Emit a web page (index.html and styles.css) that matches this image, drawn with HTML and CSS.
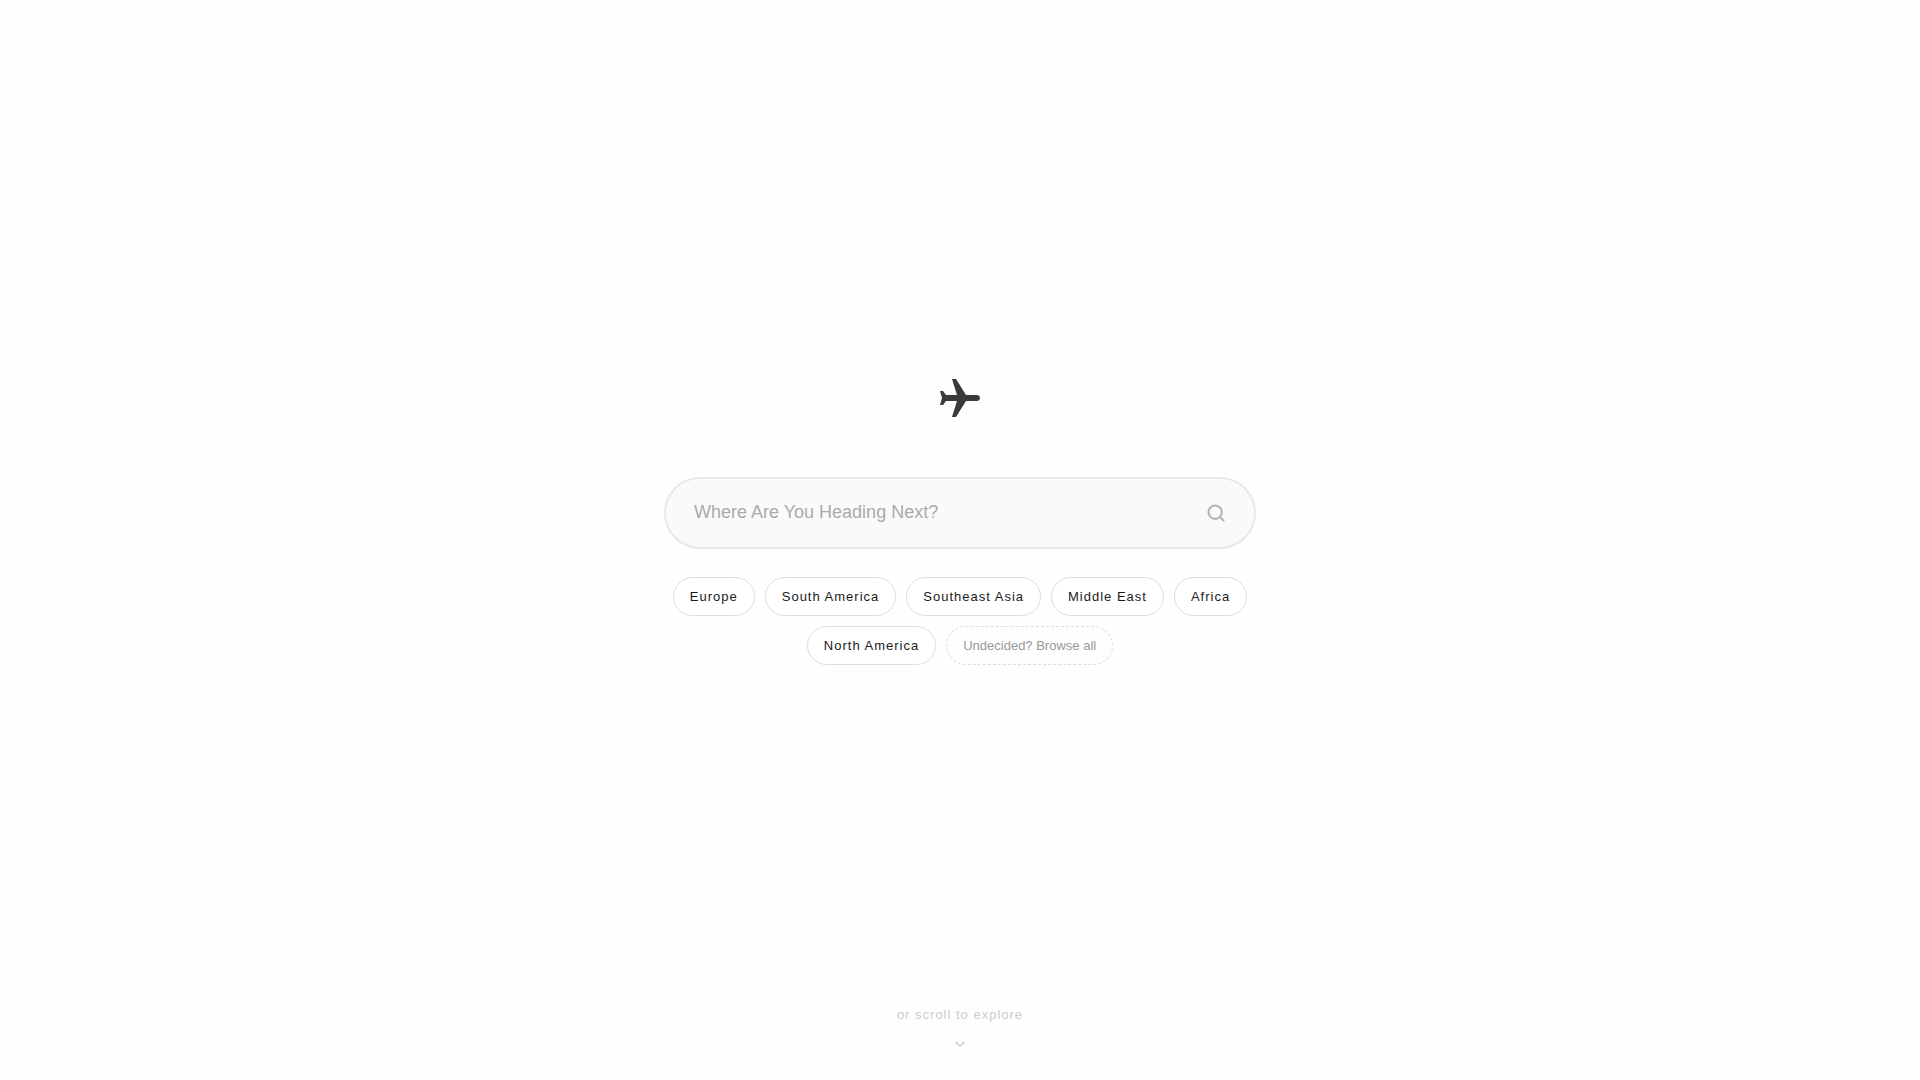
FILE: index.html
```html
<!DOCTYPE html>
<html lang="en">
<head>
    <meta charset="UTF-8">
    <meta name="viewport" content="width=device-width, initial-scale=1.0">
    <title>Where Are You Heading Next?</title>
    <link rel="stylesheet" href="styles.css">
</head>
<body>
    <main class="hero">
        <svg class="plane" viewBox="0 0 24 24" aria-hidden="true">
            <path transform="rotate(90 12 12)" d="M21 16v-2l-8-5V3.5c0-.83-.67-1.5-1.5-1.5S10 2.67 10 3.5V9l-8 5v2l8-2.5V19l-2 1.5V22l3.5-1 3.5 1v-1.5L13 19v-5.5l8 2.5z"/>
        </svg>

        <form class="search" role="search">
            <input type="text" class="search-input" id="destination" aria-label="Destination" placeholder="Where Are You Heading Next?">
            <button type="submit" class="search-button" aria-label="Search">
                <svg viewBox="0 0 24 24">
                    <circle cx="11" cy="11" r="8"/>
                    <path d="M21 21l-4.35-4.35"/>
                </svg>
            </button>
        </form>

        <div class="regions">
            <button type="button" class="pill">Europe</button>
            <button type="button" class="pill">South America</button>
            <button type="button" class="pill">Southeast Asia</button>
            <button type="button" class="pill">Middle East</button>
            <button type="button" class="pill">Africa</button>
            <button type="button" class="pill">North America</button>
            <button type="button" class="pill pill-all">Undecided? Browse all</button>
        </div>
    </main>

    <footer class="scroll-hint">
        <span>or scroll to explore</span>
        <svg viewBox="0 0 24 24" aria-hidden="true">
            <path d="M6 9l6 6 6-6"/>
        </svg>
    </footer>
</body>
</html>
```
FILE: styles.css
```css
* {
    box-sizing: border-box;
}
body {
    margin: 0;
    min-height: 100vh;
    display: flex;
    flex-direction: column;
    font-family: "Liberation Sans", Arial, sans-serif;
    background-color: #fefefe;
    color: #1a1a1a;
}
.hero {
    flex: 1;
    display: flex;
    flex-direction: column;
    align-items: center;
    justify-content: center;
    padding: 32px 24px 0;
}
.plane {
    width: 48px;
    height: 48px;
    margin-bottom: 54px;
    fill: #3a3a3a;
}
.search {
    display: flex;
    align-items: center;
    width: 100%;
    max-width: 592px;
    height: 72px;
    padding: 0 28px;
    border: 2px solid #e8e8e8;
    border-radius: 36px;
    background-color: #fafafa;
}
.search-input {
    flex: 1;
    min-width: 0;
    padding: 0;
    border: none;
    outline: none;
    background: transparent;
    font-family: inherit;
    font-size: 18px;
    color: #1a1a1a;
}
.search-input::placeholder {
    color: #aaa;
}
.search-button {
    display: flex;
    padding: 0;
    border: none;
    background: transparent;
    cursor: pointer;
}
.search-button svg {
    width: 20px;
    height: 20px;
    fill: none;
    stroke: #b5b5b5;
    stroke-width: 2.5;
    stroke-linecap: round;
}
.regions {
    display: flex;
    flex-wrap: wrap;
    justify-content: center;
    gap: 10px;
    max-width: 592px;
    margin-top: 28px;
}
.pill {
    padding: 11px 16px;
    border: 1px solid #ddd;
    border-radius: 20px;
    background-color: #fff;
    font-family: inherit;
    font-size: 13px;
    line-height: 15px;
    letter-spacing: 1px;
    color: #1a1a1a;
    cursor: pointer;
}
.pill-all {
    border-style: dashed;
    background-color: transparent;
    letter-spacing: normal;
    color: #999;
}
.pill:hover {
    border-color: #999;
}
.scroll-hint {
    display: flex;
    flex-direction: column;
    align-items: center;
    gap: 13px;
    padding-bottom: 27px;
    font-size: 13px;
    line-height: 15px;
    letter-spacing: 1px;
    color: #ccc;
}
.scroll-hint svg {
    width: 18px;
    height: 18px;
    fill: none;
    stroke: #ccc;
    stroke-width: 2;
}
```
